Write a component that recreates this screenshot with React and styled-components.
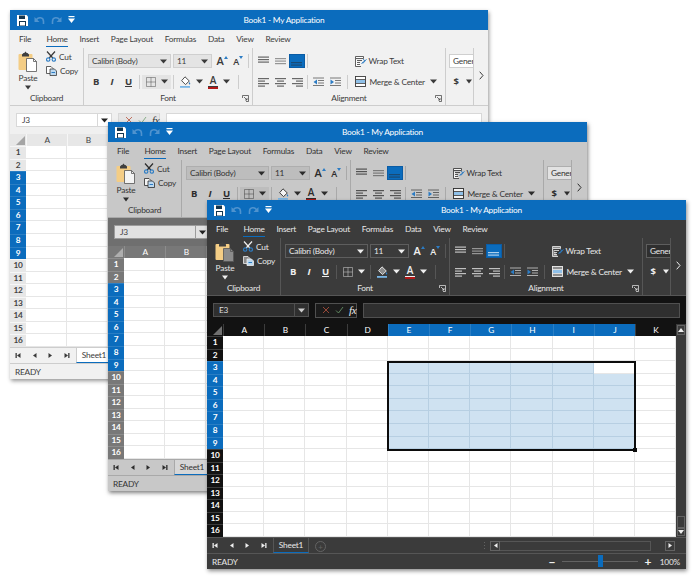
import React from "react";
import styled, { createGlobalStyle, ThemeProvider, useTheme } from "styled-components";

const BLUE = "#0b6cbd";

const palettes = {
  light: {
    ribbon: "#f1f1f1", text: "#3c3c3c", glyph: "#3a3a3a", line: "#cdcdcd", comboBg: "#e4e4e4", comboLine: "#cfcfcf",
    formula: "#f0f0f0", inputBg: "#ffffff", inputLine: "#d8d8d8", fxBg: "#e6e6e6", nameText: "#444444", nameArrow: "#222222",
    headBg: "#e7e7e7", headText: "#444444", headLine: "#f6f6f6", doc: "#ffffff", sheetTab: "#ffffff", shadow: "rgba(0,0,0,.42)",
    rail: "#c6c6c6", cellOn: "#cfe2f1", selLine: "#1f3f5c",
  },
  gray: {
    ribbon: "#c8c8c8", text: "#333333", glyph: "#2c2c2c", line: "#a9a9a9", comboBg: "#bdbdbd", comboLine: "#aeaeae",
    formula: "#6f6f6f", inputBg: "#e2e2e2", inputLine: "#9c9c9c", fxBg: "#bdbdbd", nameText: "#444444", nameArrow: "#222222",
    headBg: "#787878", headText: "#ffffff", headLine: "#8c8c8c", doc: "#f4f4f4", sheetTab: "#d6d6d6", shadow: "rgba(0,0,0,.5)",
    rail: "#9a9a9a", cellOn: "#cfe2f1", selLine: "#1f3f5c",
  },
  dark: {
    ribbon: "#3b3b3b", text: "#e8e8e8", glyph: "#efefef", line: "#565656", comboBg: "#3b3b3b", comboLine: "#5e5e5e",
    formula: "#121212", inputBg: "#2f2f2f", inputLine: "#505050", fxBg: "#1b1b1b", nameText: "#dddddd", nameArrow: "#cccccc",
    headBg: "#121212", headText: "#ffffff", headLine: "#3c3c3c", doc: "#8c8c8c", sheetTab: "#3b3b3b", shadow: "rgba(0,0,0,.45)",
    rail: "#636363", cellOn: "#cfe2f1", selLine: "#e6f0fa",
  },
};

const GlobalStyle = createGlobalStyle`
  html, body { margin: 0; padding: 0; background: #ffffff; }
  body { font-family: Lato, "Open Sans", sans-serif; }
`;

const Desktop = styled.div`
  position: relative;
  width: 696px;
  height: 580px;
  overflow: hidden;
  background: #ffffff;
`;

const Frame = styled.div`
  position: absolute;
  left: ${(p) => p.$x}px;
  top: ${(p) => p.$y}px;
  width: ${(p) => p.$w}px;
  height: 369px;
  display: flex;
  flex-direction: column;
  background: ${(p) => p.theme.ribbon};
  box-shadow: 1px 2px 4px ${(p) => p.theme.shadow};
  font-size: 8.3px;
  letter-spacing: -0.22px;
  color: ${(p) => p.theme.text};
`;

const TitleBar = styled.div`
  height: 20px;
  flex: none;
  display: flex;
  align-items: center;
  background: ${BLUE};
  color: #ffffff;
`;

const Qat = styled.div`
  width: 70px;
  flex: none;
  display: flex;
  align-items: center;
  gap: 6px;
  padding-left: 7px;
  box-sizing: border-box;
`;

const Title = styled.div`
  flex: 1;
  text-align: center;
  font-size: 8.3px;
`;

const MenuBar = styled.div`
  height: 18px;
  flex: none;
  display: flex;
  align-items: flex-start;
  gap: 11.8px;
  padding: 3px 0 0 9px;
  box-sizing: border-box;
`;

const MenuItem = styled.div`
  height: 14px;
  line-height: 13px;
  box-sizing: border-box;
  margin-left: ${(p) => (p.$active ? 3.5 : 0)}px;
  border-bottom: ${(p) => (p.$active ? `1px solid ${BLUE}` : "none")};
`;

const Ribbon = styled.div`
  height: 58px;
  flex: none;
  display: flex;
  box-sizing: border-box;
  border-bottom: 1px solid ${(p) => p.theme.line};
`;

const Group = styled.div`
  position: relative;
  width: ${(p) => p.$w}px;
  flex: none;
  box-sizing: border-box;
  display: flex;
  flex-direction: column;
  border-right: 1px solid ${(p) => p.theme.line};
  overflow: hidden;
`;

const GroupBody = styled.div`
  flex: 1;
  min-height: 0;
  display: flex;
  flex-direction: column;
  gap: 6.5px;
  padding: ${(p) => p.$pad || "6px 0 0 4px"};
`;

const GroupLabel = styled.div`
  height: 14px;
  padding-top: 2px;
  box-sizing: border-box;
  line-height: 11px;
  flex: none;
  text-align: center;
`;

const Launcher = styled.div`
  position: absolute;
  right: 3px;
  bottom: 3px;
  display: flex;
`;

const ToolRow = styled.div`
  height: 14px;
  display: flex;
  align-items: center;
`;

const Tool = styled.div`
  width: ${(p) => p.$w || 16}px;
  height: 14px;
  flex: none;
  display: flex;
  align-items: center;
  justify-content: center;
  gap: ${(p) => p.$gap || 0}px;
  margin-left: ${(p) => p.$ml || 0}px;
  color: ${(p) => p.theme.glyph};
  font-family: "Open Sans", sans-serif;
  font-weight: ${(p) => (p.$bold ? 700 : 400)};
  font-style: ${(p) => (p.$italic ? "italic" : "normal")};
  text-decoration: ${(p) => (p.$under ? "underline" : "none")};
  font-size: 9.5px;
  ${(p) => (p.$on ? `background: ${BLUE}; box-shadow: inset 0 0 0 1px #0a5ca5;` : "")}
  ${(p) => (p.$box ? `background: ${p.theme.comboBg};` : "")}
`;

const Sep = styled.div`
  width: 1px;
  height: 14px;
  flex: none;
  margin: 0 ${(p) => p.$m ?? 2}px;
  background: ${(p) => p.theme.line};
`;

const Combo = styled.div`
  width: ${(p) => p.$w}px;
  height: 14px;
  flex: none;
  box-sizing: border-box;
  display: flex;
  align-items: center;
  justify-content: space-between;
  padding: 0 2px 0 3px;
  margin-right: ${(p) => p.$mr || 0}px;
  background: ${(p) => (p.$plain ? p.theme.inputBg : p.theme.comboBg)};
  border: 1px solid ${(p) => p.theme.comboLine};
  white-space: nowrap;
`;

const PasteCol = styled.div`
  width: 20px;
  margin-left: 8px;
  display: flex;
  flex-direction: column;
  align-items: center;
  flex: none;
`;

const PasteLabel = styled.div`
  line-height: 12px;
`;

const PasteArrow = styled.div`
  height: 6px;
  display: flex;
  align-items: center;
  color: ${(p) => p.theme.glyph};
`;

const ClipRow = styled.div`
  display: flex;
`;

const ClipCol = styled.div`
  display: flex;
  flex-direction: column;
  gap: 3px;
  margin-left: 8px;
`;

const ClipItem = styled.div`
  display: flex;
  align-items: center;
  gap: 3px;
  height: 11px;
`;

const WideTool = styled.div`
  display: flex;
  align-items: center;
  gap: ${(p) => p.$gap || 2}px;
  margin-left: ${(p) => p.$ml || 0}px;
  white-space: nowrap;
`;

const NumberClip = styled.div`
  width: 25px;
  height: 14px;
  overflow: hidden;
`;

const Chevron = styled.div`
  flex: 1;
  display: flex;
  align-items: center;
  justify-content: center;
  padding-bottom: 2px;
`;

const FormulaBar = styled.div`
  height: 28px;
  flex: none;
  display: flex;
  align-items: center;
  gap: 6px;
  padding: 0 6px;
  box-sizing: border-box;
  background: ${(p) => p.theme.formula};
`;

const NameBox = styled.div`
  width: 96px;
  height: 14px;
  flex: none;
  display: flex;
  box-sizing: border-box;
  background: ${(p) => p.theme.inputBg};
  border: 1px solid ${(p) => p.theme.inputLine};
`;

const NameText = styled.div`
  flex: 1;
  line-height: 12px;
  padding-left: 5px;
  color: ${(p) => p.theme.nameText};
  border-right: 1px solid ${(p) => p.theme.inputLine};
`;

const NameArrow = styled.div`
  width: 13px;
  display: flex;
  align-items: center;
  justify-content: center;
  color: ${(p) => p.theme.nameArrow};
`;

const FxBox = styled.div`
  width: 42px;
  height: 15px;
  flex: none;
  display: flex;
  align-items: center;
  gap: 5px;
  padding-left: 6px;
  box-sizing: border-box;
  background: ${(p) => p.theme.fxBg};
  border: 1px solid ${(p) => p.theme.inputLine};
`;

const FxText = styled.span`
  font-family: "Liberation Serif", serif;
  font-style: italic;
  font-size: 11px;
  line-height: 12px;
  color: ${(p) => p.theme.glyph};
`;

const FormulaInput = styled.div`
  flex: 1;
  height: 15px;
  box-sizing: border-box;
  background: ${(p) => p.theme.inputBg};
  border: 1px solid ${(p) => p.theme.inputLine};
`;

const Sheet = styled.div`
  flex: 1;
  display: flex;
  min-height: 0;
`;

const Grid = styled.div`
  position: relative;
  flex: 1;
  display: grid;
  grid-template-columns: 16px repeat(10, 41.2px) 1fr;
  grid-template-rows: 12px repeat(16, 1fr);
  background: #ffffff;
`;

const Corner = styled.div`
  background: ${(p) => p.theme.headBg};
  display: flex;
  align-items: flex-end;
  justify-content: flex-end;
  padding: 0 1px 1px 0;
`;

const ColHead = styled.div`
  background: ${(p) => (p.$on ? BLUE : p.theme.headBg)};
  color: ${(p) => (p.$on ? "#ffffff" : p.theme.headText)};
  border-left: 1px solid ${(p) => (p.$on ? "#2a7ec4" : p.theme.headLine)};
  text-align: center;
  line-height: 12px;
`;

const RowHead = styled.div`
  background: ${(p) => (p.$on ? BLUE : p.theme.headBg)};
  color: ${(p) => (p.$on ? "#ffffff" : p.theme.headText)};
  border-top: 1px solid ${(p) => (p.$on ? "#2a7ec4" : p.theme.headLine)};
  text-align: center;
  line-height: 11.5px;
  font-weight: 700;
`;

const Cell = styled.div`
  box-sizing: border-box;
  background: ${(p) => (p.$on ? p.theme.cellOn : "#ffffff")};
  border-right: 1px solid ${(p) => (p.$on ? "#b7cfe2" : "#e6e6e6")};
  border-bottom: 1px solid ${(p) => (p.$on ? "#b7cfe2" : "#e6e6e6")};
`;

/* absolute child of the grid: grid-column/row give it the cell range as its box */
const SelectionFrame = styled.div`
  position: absolute;
  grid-column: 6 / 12;
  grid-row: 4 / 11;
  inset: -0.5px -1.5px -1.5px -0.5px;
  border: 2px solid #0c0c0c;
  pointer-events: none;
`;

const FillHandle = styled.div`
  position: absolute;
  right: -3px;
  bottom: -3px;
  width: 4px;
  height: 4px;
  background: #0c0c0c;
`;

const VScroll = styled.div`
  width: 10px;
  flex: none;
  display: flex;
  flex-direction: column;
  box-sizing: border-box;
  padding: 1px;
  background: ${(p) => p.theme.ribbon};
`;

const ScrollBtn = styled.div`
  height: ${(p) => p.$h || 10}px;
  flex: none;
  display: flex;
  align-items: center;
  justify-content: center;
  box-sizing: border-box;
  border: 1px solid ${(p) => p.theme.rail};
  color: ${(p) => p.theme.glyph};
`;

const ScrollFill = styled.div`
  flex: 1;
`;

const TabBar = styled.div`
  height: 17px;
  flex: none;
  display: flex;
  align-items: stretch;
  box-sizing: border-box;
  border-top: 1px solid ${(p) => p.theme.line};
  border-bottom: 1px solid ${(p) => p.theme.line};
`;

const NavGroup = styled.div`
  width: 66px;
  flex: none;
  display: flex;
  align-items: center;
  justify-content: space-around;
  padding: 0 1px 0 0;
  box-sizing: border-box;
  color: ${(p) => p.theme.glyph};
`;

const SheetTab = styled.div`
  width: 36px;
  flex: none;
  text-align: center;
  line-height: 14px;
  box-sizing: border-box;
  background: ${(p) => p.theme.sheetTab};
  border: 1px solid ${(p) => p.theme.line};
  border-top: none;
  border-bottom: 1.5px solid ${BLUE};
`;

const AddTab = styled.div`
  width: 9px;
  height: 9px;
  margin: 3px 0 0 6px;
  flex: none;
  border: 1px solid ${(p) => p.theme.rail};
  border-radius: 50%;
  display: flex;
  align-items: center;
  justify-content: center;
  font-size: 8px;
  line-height: 8px;
  color: ${(p) => p.theme.rail};
`;

const HScroll = styled.div`
  margin: 0 11px 0 auto;
  display: flex;
  align-items: center;
  color: ${(p) => p.theme.glyph};
`;

const Grip = styled.div`
  width: 1px;
  height: 7px;
  margin-right: 5px;
  background: repeating-linear-gradient(${(p) => p.theme.rail} 0 1px, transparent 1px 3px);
`;

const HBtn = styled.div`
  width: 10px;
  height: 10px;
  box-sizing: border-box;
  border: 1px solid ${(p) => p.theme.rail};
  display: flex;
  align-items: center;
  justify-content: center;
`;

const HTrack = styled.div`
  width: 151px;
  height: 10px;
  box-sizing: border-box;
  border: 1px solid ${(p) => p.theme.line};
  border-left: none;
  margin-right: 14px;
`;

const StatusBar = styled.div`
  height: 15px;
  flex: none;
  display: flex;
  align-items: center;
  padding: 0 6px 0 5px;
`;

const ZoomBox = styled.div`
  margin-left: auto;
  display: flex;
  align-items: center;
`;

const ZoomSign = styled.div`
  width: 10px;
  text-align: center;
  font-size: 12px;
  line-height: 12px;
  font-weight: 700;
  color: ${(p) => p.theme.glyph};
`;

const ZoomTrack = styled.div`
  position: relative;
  width: 76px;
  height: 1px;
  margin: 0 5px;
  background: ${(p) => p.theme.rail};
`;

const ZoomThumb = styled.div`
  position: absolute;
  left: 36px;
  top: -6px;
  width: 5px;
  height: 12px;
  background: ${BLUE};
`;

const ZoomValue = styled.div`
  margin-left: 7px;
`;

/* icons */
const Svg = ({ w, h, children }) => (
  <svg width={w} height={h} viewBox={`0 0 ${w} ${h}`} style={{ display: "block", flex: "none" }}>
    {children}
  </svg>
);

const Down = ({ size = 7 }) => (
  <Svg w={size} h={5}>
    <path d={`M0 0.5H${size}L${size / 2} 4.5Z`} fill="currentColor" />
  </Svg>
);

const SaveIcon = () => (
  <Svg w={11} h={11}>
    <path d="M0 0H9.5L11 1.5V11H0Z" fill="#ffffff" />
    <rect x="2" y="0.5" width="6" height="3.5" fill="#14364f" />
    <rect x="2" y="6" width="7" height="5" fill="#14364f" />
    <rect x="3" y="7" width="5" height="3.5" fill="#ffffff" />
  </Svg>
);

const UndoIcon = ({ flip }) => (
  <Svg w={11} h={10}>
    <g transform={flip ? "translate(11 0) scale(-1 1)" : undefined}>
      <path d="M2 5.5C4 1.5 9.5 2 9.5 6.5V9" fill="none" stroke="#4f93cf" strokeWidth="1.6" />
      <path d="M0.5 2V7H5.5Z" fill="#4f93cf" />
    </g>
  </Svg>
);

const QatMore = () => (
  <Svg w={7} h={8}>
    <rect x="0.5" y="0" width="6" height="1.2" fill="#ffffff" />
    <path d="M0 2.5H7L3.5 7Z" fill="#ffffff" />
  </Svg>
);

const PasteIcon = () => {
  const t = useTheme();
  return (
    <Svg w={20} h={21}>
      <rect x="0.5" y="3" width="14" height="16" rx="1" fill="#f4cd85" />
      <path d="M4 3.5L5.5 2H6.5C6.8 0.2 8.2 0.2 8.5 2H9.5L11 3.5V5.5H4Z" fill="#3f3f3f" />
      <path d="M8.5 7.5H15.5L18.5 10.5V20.5H8.5Z" fill={t.doc} stroke="#555555" strokeWidth="0.8" />
      <path d="M15.5 7.5V10.5H18.5" fill="none" stroke="#555555" strokeWidth="0.8" />
    </Svg>
  );
};

const CutIcon = () => {
  const t = useTheme();
  return (
    <Svg w={10} h={11}>
      <path d="M1 0.5L6.8 7M9 0.5L3.2 7" stroke={t.glyph} strokeWidth="1.2" fill="none" />
      <circle cx="2.2" cy="8.6" r="1.7" fill="none" stroke="#2c7cc4" strokeWidth="1.1" />
      <circle cx="7.8" cy="8.6" r="1.7" fill="none" stroke="#2c7cc4" strokeWidth="1.1" />
    </Svg>
  );
};

const CopyIcon = () => {
  const t = useTheme();
  return (
    <Svg w={11} h={10}>
      <path d="M0.5 0.5H5L7 2.5V7.5H0.5Z" fill={t.doc} stroke={t.glyph} strokeWidth="0.8" />
      <path d="M4 3H8.5L10.5 5V9.5H4Z" fill="#bcd8ef" stroke={t.glyph} strokeWidth="0.8" />
      <path d="M5.5 6.5H9" stroke="#2c7cc4" strokeWidth="1" />
    </Svg>
  );
};

const GrowTool = ({ shrink }) => (
  <Tool $w={16} $bold style={{ fontSize: shrink ? 9 : 11, fontWeight: 600, alignItems: "flex-end" }}>
    A
    <span style={{ alignSelf: "flex-start", marginTop: 2 }}>
      <Svg w={4} h={3}>
        <path d={shrink ? "M0 0H4L2 3Z" : "M0 3H4L2 0Z"} fill="#2c7cc4" />
      </Svg>
    </span>
  </Tool>
);

const BordersIcon = () => {
  const t = useTheme();
  return (
    <Svg w={10} h={10}>
      <path d="M0.5 0.5H9.5V9.5H0.5ZM5 0.5V9.5M0.5 5H9.5" fill="none" stroke={t.glyph} strokeWidth="0.8" opacity="0.55" />
    </Svg>
  );
};

const FillIcon = () => {
  const t = useTheme();
  return (
    <Svg w={11} h={12}>
      <path d="M5 0.8L9.3 5L5.5 8.6L1.6 4.7Z" fill={t.doc} stroke={t.glyph} strokeWidth="0.9" />
      <path d="M9.5 6C10.5 7.3 10.5 8.4 9.5 8.4C8.6 8.4 8.6 7.3 9.5 6Z" fill="#2c7cc4" />
      <rect x="0" y="10" width="10" height="1.8" fill="#79b6e6" />
    </Svg>
  );
};

const FontColorBar = styled.span`
  position: absolute;
  left: 4px;
  right: 4px;
  bottom: 0;
  height: 2px;
  background: #b01818;
  border-top: 1px solid ${(p) => p.theme.glyph};
`;

const FontColorTool = () => (
  <Tool $w={18} style={{ position: "relative", fontWeight: 600, fontSize: 10, alignItems: "flex-start", lineHeight: "10px" }}>
    A
    <FontColorBar />
  </Tool>
);

const LinesIcon = ({ rows, color, light }) => {
  const t = useTheme();
  return (
    <Svg w={11} h={10}>
      {rows.map(([x, y, w], i) => (
        <rect key={i} x={x} y={y} width={w} height="1.2" fill={color || t.glyph} opacity={light ? 0.5 : 0.75} />
      ))}
    </Svg>
  );
};

const VALIGN_TOP = [[0, 0.5, 11], [0, 3, 11], [0, 5.5, 11]];
const VALIGN_MID = [[0, 2, 11], [0, 4.5, 11], [0, 7, 11]];
const VALIGN_BOT = [[0, 6, 11], [0, 8.5, 11]];
const ALIGN_LEFT = [[0, 1, 11], [0, 3.5, 7], [0, 6, 11], [0, 8.5, 7]];
const ALIGN_CENTER = [[0, 1, 11], [2, 3.5, 7], [0, 6, 11], [2, 8.5, 7]];
const ALIGN_RIGHT = [[0, 1, 11], [4, 3.5, 7], [0, 6, 11], [4, 8.5, 7]];

const IndentIcon = ({ out }) => {
  const t = useTheme();
  return (
    <Svg w={11} h={10}>
      <path d="M0 1H11M5 3.5H11M5 6H11M0 8.5H11" stroke={t.glyph} strokeWidth="1" opacity="0.65" />
      <path d={out ? "M4 2.5V7.5L0.5 5Z" : "M0.5 2.5V7.5L4 5Z"} fill="#2c7cc4" />
    </Svg>
  );
};

const WrapIcon = () => {
  const t = useTheme();
  return (
    <Svg w={12} h={11}>
      <path d="M0.5 0.5H8.5V2.5H0.5ZM0.5 2.5V10.5H6" fill={t.doc} stroke={t.glyph} strokeWidth="0.8" />
      <path d="M2 4.5H7M2 6.5H5M2 8.5H5" stroke={t.glyph} strokeWidth="0.8" />
      <path d="M6.5 7.5L11.5 3.5M8 3.5C11 4 9.5 7 7.5 7" fill="none" stroke="#2c7cc4" strokeWidth="1" />
    </Svg>
  );
};

const MergeIcon = () => {
  const t = useTheme();
  return (
    <Svg w={11} h={11}>
      <rect x="0.5" y="0.5" width="10" height="10" fill={t.doc} stroke={t.glyph} strokeWidth="0.9" />
      <path d="M0.5 3.5H10.5M0.5 7.5H10.5" stroke={t.glyph} strokeWidth="0.8" />
      <rect x="1" y="4" width="9" height="3" fill="#8fc0e8" />
    </Svg>
  );
};

const CrossIcon = () => (
  <Svg w={8} h={8}>
    <path d="M1 1L7 7M7 1L1 7" stroke="#b8543f" strokeWidth="1" opacity="0.8" />
  </Svg>
);

const CheckIcon = () => (
  <Svg w={9} h={8}>
    <path d="M1 4.5L3.5 7L8 1" stroke="#6f9f6f" strokeWidth="1" fill="none" opacity="0.8" />
  </Svg>
);

const CornerMark = () => {
  const t = useTheme();
  return (
    <Svg w={9} h={9}>
      <path d="M9 0V9H0Z" fill={t.headText} opacity="0.4" />
    </Svg>
  );
};

const NavIcon = ({ dir, bar }) => (
  <Svg w={7} h={7}>
    <g transform={dir === "left" ? "translate(7 0) scale(-1 1)" : undefined}>
      <path d="M1.5 1V6L5 3.5Z" fill="currentColor" />
      {bar && <rect x="5.2" y="1" width="1.3" height="5" fill="currentColor" />}
    </g>
  </Svg>
);

const UpTri = ({ down }) => (
  <Svg w={6} h={4}>
    <path d={down ? "M0 0H6L3 4Z" : "M0 4H6L3 0Z"} fill="currentColor" />
  </Svg>
);

const ChevronIcon = () => {
  const t = useTheme();
  return (
    <Svg w={5} h={9}>
      <path d="M0.7 0.7L4 4.5L0.7 8.3" fill="none" stroke={t.glyph} strokeWidth="1" />
    </Svg>
  );
};

const LauncherMark = () => {
  const t = useTheme();
  return (
    <Svg w={7} h={7}>
      <path d="M0.5 3V0.5H6.5V6.5H4M2 2L5 5M5 3V5H3" fill="none" stroke={t.glyph} strokeWidth="0.7" />
    </Svg>
  );
};

const menus = ["File", "Home", "Insert", "Page Layout", "Formulas", "Data", "View", "Review"];
const columns = ["A", "B", "C", "D", "E", "F", "G", "H", "I", "J", "K"];
const rows = Array.from({ length: 16 }, (_, i) => i + 1);

const isCellOn = (c, r) => c >= 4 && c <= 9 && r >= 3 && r <= 9 && !(c === 9 && r === 3);

function SheetGrid() {
  return (
    <Grid>
      <Corner>
        <CornerMark />
      </Corner>
      {columns.map((c, i) => (
        <ColHead key={c} $on={i >= 4 && i <= 9}>{c}</ColHead>
      ))}
      {rows.map((r) => (
        <React.Fragment key={r}>
          <RowHead $on={r >= 3 && r <= 9}>{r}</RowHead>
          {columns.map((c, i) => (
            <Cell key={c} $on={isCellOn(i, r)} />
          ))}
        </React.Fragment>
      ))}
      <SelectionFrame>
        <FillHandle />
      </SelectionFrame>
    </Grid>
  );
}

function RibbonGroups() {
  const t = useTheme();
  return (
    <Ribbon>
      <Group $w={74}>
        <GroupBody $pad="3px 0 0 0">
          <ClipRow>
            <PasteCol>
              <PasteIcon />
              <PasteLabel>Paste</PasteLabel>
              <PasteArrow><Down size={6} /></PasteArrow>
            </PasteCol>
            <ClipCol>
              <ClipItem><CutIcon />Cut</ClipItem>
              <ClipItem><CopyIcon />Copy</ClipItem>
            </ClipCol>
          </ClipRow>
        </GroupBody>
        <GroupLabel>Clipboard</GroupLabel>
      </Group>

      <Group $w={169}>
        <GroupBody>
          <ToolRow>
            <Combo $w={83} $mr={2}>Calibri (Body)<Tool $w={9}><Down /></Tool></Combo>
            <Combo $w={39} $mr={2}>11<Tool $w={9}><Down /></Tool></Combo>
            <GrowTool />
            <GrowTool shrink />
            <Sep $m={2} />
          </ToolRow>
          <ToolRow>
            <Tool $bold>B</Tool>
            <Tool $italic $bold>I</Tool>
            <Tool $w={17} $under $bold>U</Tool>
            <Sep $m={2} />
            <Tool $w={29} $box $gap={5}>
              <BordersIcon />
              <Down />
            </Tool>
            <Sep $m={1.5} />
            <Tool $w={20}><FillIcon /></Tool>
            <Tool $w={9}><Down /></Tool>
            <FontColorTool />
            <Tool $w={9}><Down /></Tool>
            <Sep $m={7} />
          </ToolRow>
        </GroupBody>
        <GroupLabel>Font</GroupLabel>
        <Launcher><LauncherMark /></Launcher>
      </Group>

      <Group $w={193}>
        <GroupBody $pad="6px 0 0 1.5px">
          <ToolRow>
            <Tool $w={17}><LinesIcon rows={VALIGN_TOP} /></Tool>
            <Tool $w={17}><LinesIcon rows={VALIGN_MID} light /></Tool>
            <Tool $on><LinesIcon rows={VALIGN_BOT} color={t.selLine} /></Tool>
            <Sep $m={2} />
            <WideTool $ml={45} $gap={2}><WrapIcon />Wrap Text</WideTool>
          </ToolRow>
          <ToolRow>
            <Tool $w={17}><LinesIcon rows={ALIGN_LEFT} /></Tool>
            <Tool $w={17}><LinesIcon rows={ALIGN_CENTER} /></Tool>
            <Tool $w={17}><LinesIcon rows={ALIGN_RIGHT} /></Tool>
            <Sep $m={1.5} />
            <Tool $w={17}><IndentIcon out /></Tool>
            <Tool $w={17}><IndentIcon /></Tool>
            <Sep $m={3} />
            <WideTool $ml={4} $gap={4}><MergeIcon />Merge &amp; Center</WideTool>
            <Tool $w={12} $ml={3}><Down /></Tool>
          </ToolRow>
        </GroupBody>
        <GroupLabel>Alignment</GroupLabel>
        <Launcher><LauncherMark /></Launcher>
      </Group>

      <Group $w={28}>
        <GroupBody $pad="6px 0 0 3px">
          <NumberClip>
            <Combo $w={60} $plain>General</Combo>
          </NumberClip>
          <ToolRow>
            <Tool $w={14} $bold>$</Tool>
            <Tool $w={12}><Down size={6} /></Tool>
          </ToolRow>
        </GroupBody>
        <GroupLabel />
      </Group>
      <Chevron><ChevronIcon /></Chevron>
    </Ribbon>
  );
}

function SpreadsheetWindow({ variant, x, y, w, cellRef }) {
  return (
    <ThemeProvider theme={palettes[variant]}>
      <Frame $x={x} $y={y} $w={w}>
        <TitleBar>
          <Qat>
            <SaveIcon />
            <UndoIcon />
            <UndoIcon flip />
            <QatMore />
          </Qat>
          <Title>Book1 - My Application</Title>
        </TitleBar>
        <MenuBar>
          {menus.map((m) => (
            <MenuItem key={m} $active={m === "Home"}>{m}</MenuItem>
          ))}
        </MenuBar>
        <RibbonGroups />
        <FormulaBar>
          <NameBox>
            <NameText>{cellRef}</NameText>
            <NameArrow><Down /></NameArrow>
          </NameBox>
          <FxBox>
            <CrossIcon />
            <CheckIcon />
            <FxText>fx</FxText>
          </FxBox>
          <FormulaInput />
        </FormulaBar>
        <Sheet>
          <SheetGrid />
          <VScroll>
            <ScrollBtn><UpTri /></ScrollBtn>
            <ScrollFill />
            <ScrollBtn $h={12} />
            <ScrollBtn $h={8}><UpTri down /></ScrollBtn>
          </VScroll>
        </Sheet>
        <TabBar>
          <NavGroup>
            <NavIcon dir="left" bar />
            <NavIcon dir="left" />
            <NavIcon />
            <NavIcon bar />
          </NavGroup>
          <SheetTab>Sheet1</SheetTab>
          <AddTab>+</AddTab>
          <HScroll>
            <Grip />
            <HBtn><NavIcon dir="left" /></HBtn>
            <HTrack />
            <HBtn><NavIcon /></HBtn>
          </HScroll>
        </TabBar>
        <StatusBar>
          READY
          <ZoomBox>
            <ZoomSign>−</ZoomSign>
            <ZoomTrack><ZoomThumb /></ZoomTrack>
            <ZoomSign>+</ZoomSign>
            <ZoomValue>100%</ZoomValue>
          </ZoomBox>
        </StatusBar>
      </Frame>
    </ThemeProvider>
  );
}

export default function App() {
  return (
    <Desktop>
      <GlobalStyle />
      <SpreadsheetWindow variant="light" x={10} y={10} w={478} cellRef="J3" />
      <SpreadsheetWindow variant="gray" x={108} y={122} w={479} cellRef="J3" />
      <SpreadsheetWindow variant="dark" x={207} y={200} w={479} cellRef="E3" />
    </Desktop>
  );
}
